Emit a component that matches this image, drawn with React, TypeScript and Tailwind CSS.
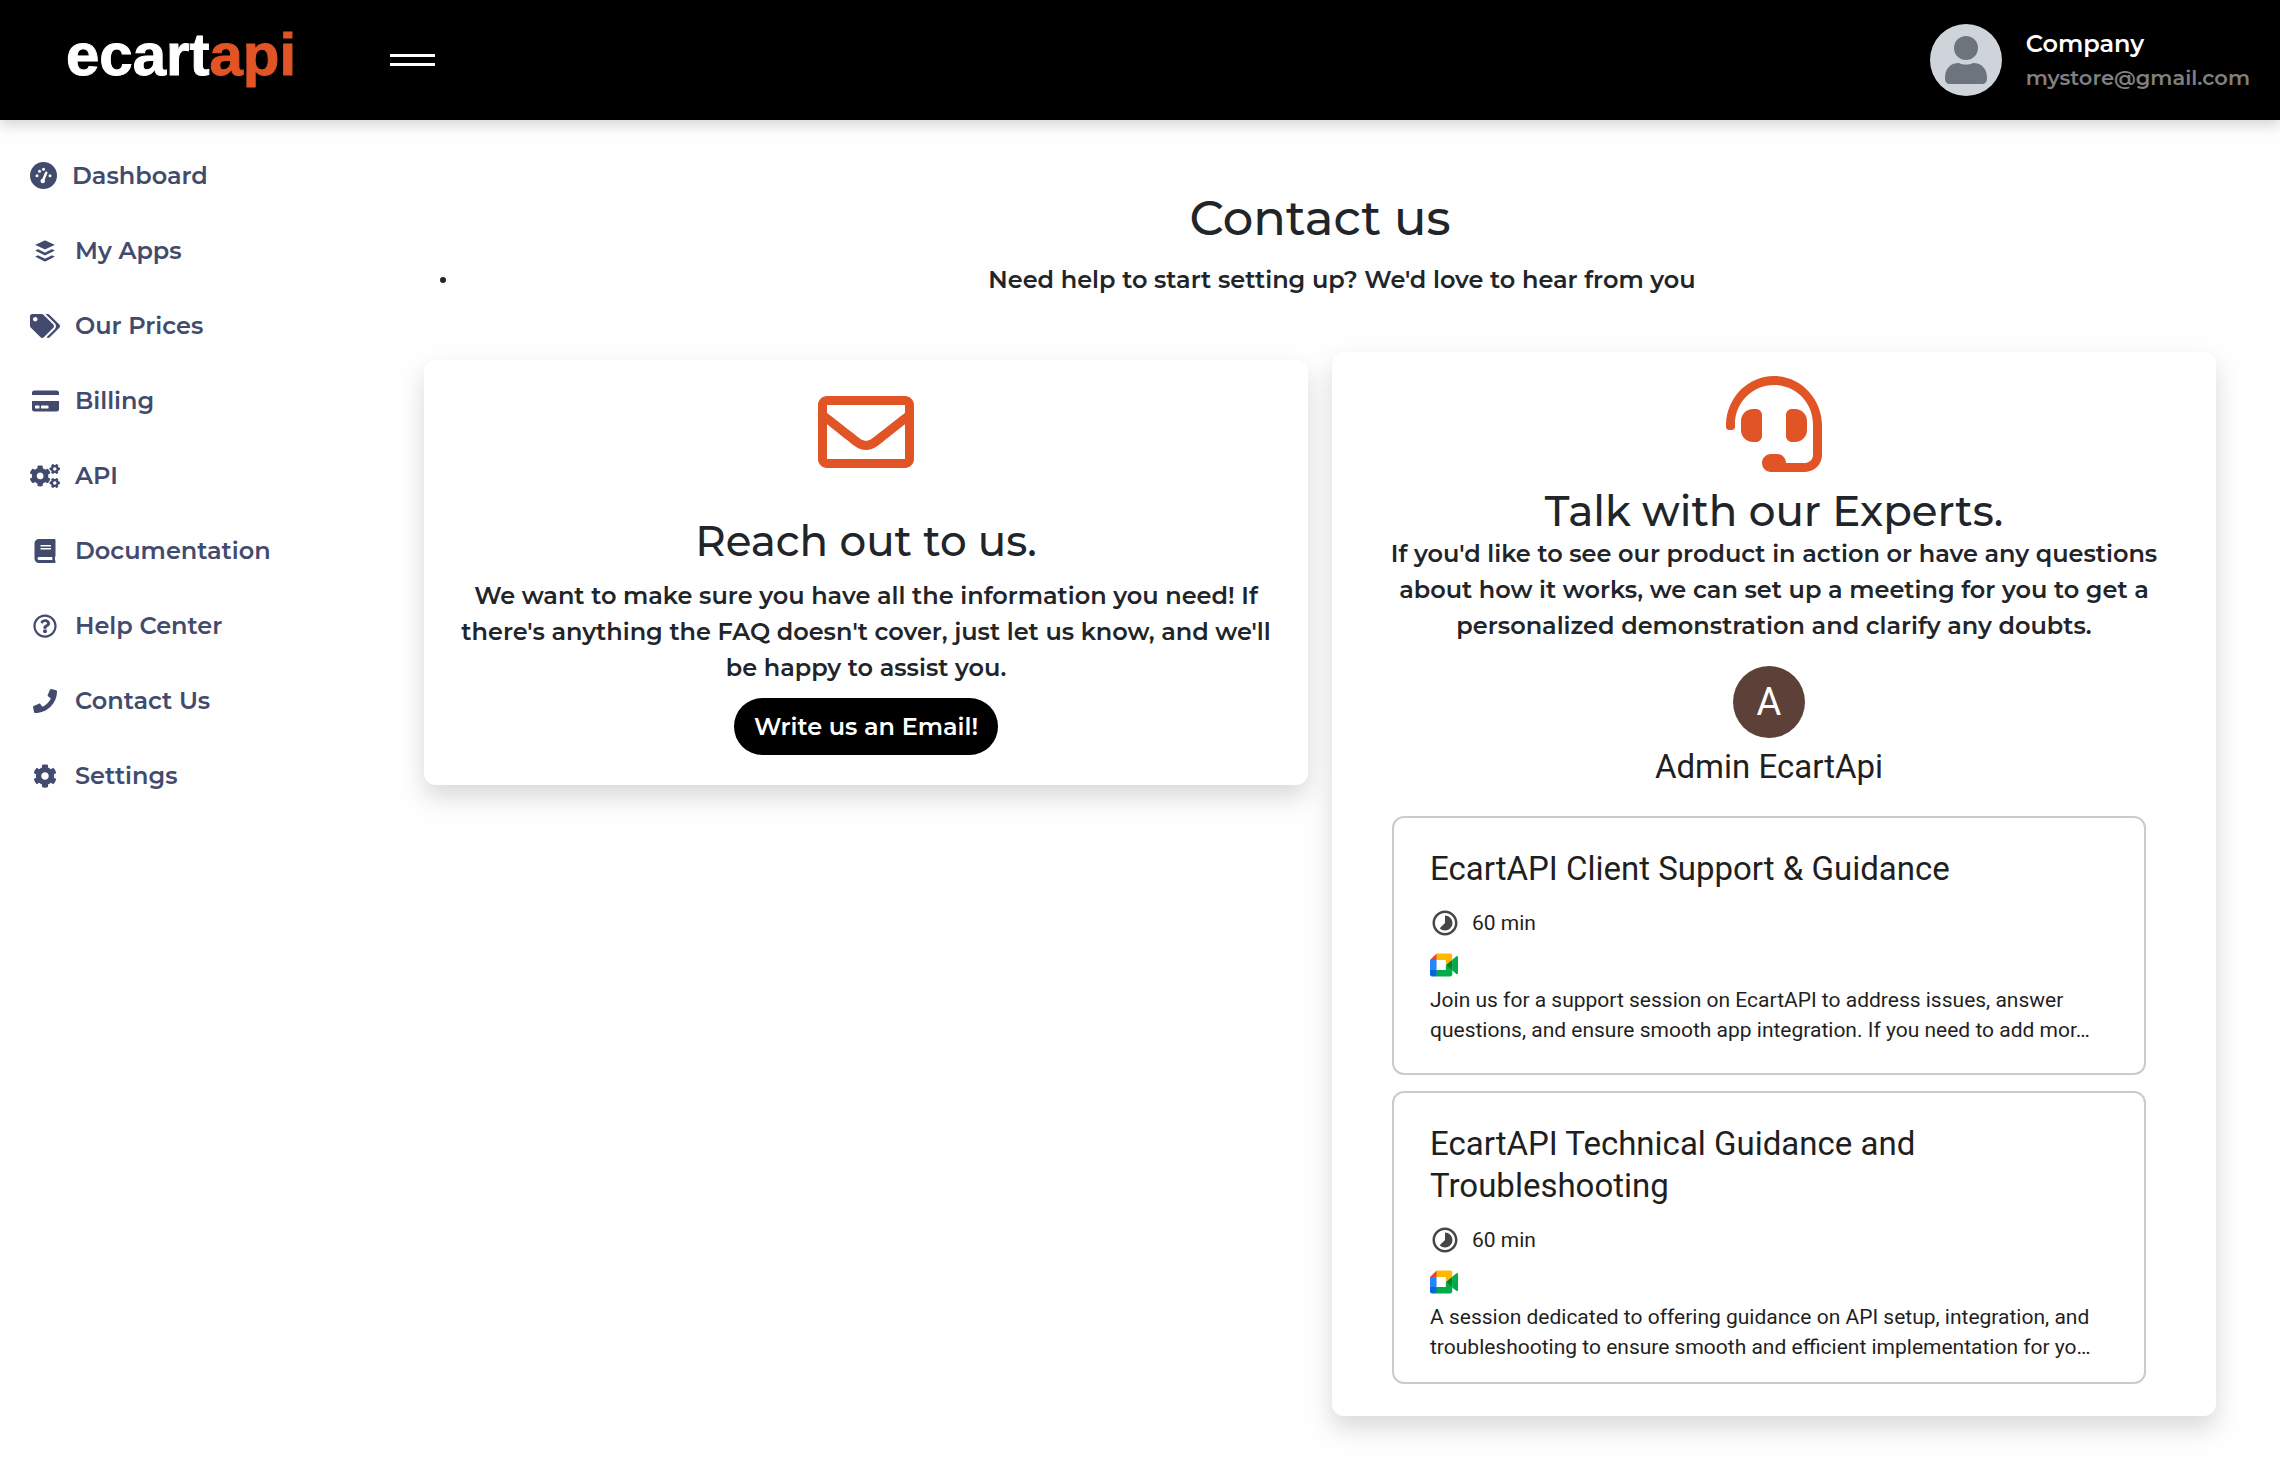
import type { ComponentType } from "react";
import {
  FaBook,
  FaBuffer,
  FaCog,
  FaCogs,
  FaCreditCard,
  FaHeadset,
  FaPhone,
  FaRegEnvelope,
  FaRegQuestionCircle,
  FaTags,
} from "react-icons/fa";
import { MdTimelapse } from "react-icons/md";

type NavItem = {
  href: string;
  label: string;
  icon: ComponentType<{ className?: string }>;
  size: string;
  slot?: string;
};

const NAV: NavItem[] = [
  { href: "#dashboard", label: "Dashboard", icon: GaugeIcon, size: "size-[27px]", slot: "w-[27px]" },
  { href: "#apps", label: "My Apps", icon: FaBuffer, size: "size-6" },
  { href: "#prices", label: "Our Prices", icon: FaTags, size: "h-6 w-[30px]" },
  { href: "#billing", label: "Billing", icon: FaCreditCard, size: "h-6 w-[27px]" },
  { href: "#api", label: "API", icon: FaCogs, size: "h-6 w-[30px]" },
  { href: "#docs", label: "Documentation", icon: FaBook, size: "size-6" },
  { href: "#help", label: "Help Center", icon: FaRegQuestionCircle, size: "size-6" },
  { href: "#contact", label: "Contact Us", icon: FaPhone, size: "size-6" },
  { href: "#settings", label: "Settings", icon: FaCog, size: "size-6" },
];

const SESSIONS = [
  {
    title: "EcartAPI Client Support & Guidance",
    duration: "60 min",
    description:
      "Join us for a support session on EcartAPI to address issues, answer questions, and ensure smooth app integration. If you need to add mor…",
    pad: "pb-7",
  },
  {
    title: "EcartAPI Technical Guidance and Troubleshooting",
    duration: "60 min",
    description:
      "A session dedicated to offering guidance on API setup, integration, and troubleshooting to ensure smooth and efficient implementation for yo…",
    pad: "pb-5",
  },
];

function GaugeIcon({ className }: { className?: string }) {
  return (
    <svg viewBox="0 0 54 54" className={className} aria-hidden="true">
      <circle cx="27" cy="27" r="27" fill="currentColor" />
      <g fill="#fefefe">
        <circle cx="14" cy="27.5" r="3" />
        <circle cx="19" cy="18.5" r="3" />
        <circle cx="27" cy="14.5" r="3" />
        <circle cx="40" cy="27.5" r="3" />
        <circle cx="25.5" cy="38" r="4.5" />
      </g>
      <path d="M26 37l6.500-15.500" stroke="#fefefe" strokeWidth="5" strokeLinecap="round" />
    </svg>
  );
}

function Logo() {
  return (
    <a
      href="#home"
      aria-label="ecartapi"
      className="flex pb-[10px] font-['Liberation_Sans',sans-serif] text-[60px] leading-[60px] font-bold [-webkit-text-stroke:1px]"
    >
      <span className="text-white">ecart</span>
      <span className="text-[#e05426]">api</span>
    </a>
  );
}

function Avatar() {
  return (
    <svg viewBox="0 0 72 72" className="size-[72px] shrink-0" aria-hidden="true">
      <circle cx="36" cy="36" r="36" fill="#ced4da" />
      <circle cx="36" cy="24" r="12" fill="#6c757d" />
      <path d="M15 54c0-9 5-15 14-15 4 2 10 2 14 0 9 0 14 6 14 15 0 4-2 6-5 6H20c-3 0-5-2-5-6z" fill="#6c757d" />
    </svg>
  );
}

function MeetIcon() {
  return (
    <svg viewBox="0 0 87.5 72" className="h-6 w-7" role="img" aria-label="Google Meet">
      <path fill="#00832d" d="M49.5 36l8.53 9.75 11.47 7.33 2-17.02-2-16.64-11.69 6.44z" />
      <path fill="#0066da" d="M0 51.5V66c0 3.315 2.685 6 6 6h14.5l3-10.96-3-9.54-9.95-3z" />
      <path fill="#e94235" d="M20.5 0L0 20.5l10.55 3 9.95-3 2.95-9.41z" />
      <path fill="#2684fc" d="M20.5 20.5H0v31h20.5z" />
      <path
        fill="#00ac47"
        d="M82.6 8.68L69.5 19.42v33.66l13.16 10.79c1.97 1.54 4.85.135 4.85-2.37V11c0-2.535-2.945-3.925-4.91-2.32zM49.5 36v15.5h-29V72h43c3.315 0 6-2.685 6-6V53.08z"
      />
      <path fill="#ffba00" d="M63.5 0h-43v20.5h29V36l20-16.57V6c0-3.315-2.685-6-6-6z" />
    </svg>
  );
}

function Header() {
  return (
    <header className="flex h-[120px] items-center bg-black pr-[30px] pl-[66px] shadow-[0_6px_12px_rgba(0,0,0,0.15)]">
      <Logo />
      <button type="button" aria-label="Toggle menu" className="ml-[94px] flex w-[45px] flex-col gap-[6px]">
        <span className="h-[3px] w-full bg-white" />
        <span className="h-[3px] w-full bg-white" />
      </button>
      <div className="ml-auto flex items-center gap-6">
        <Avatar />
        <div className="pt-[2px] font-semibold">
          <p className="text-[24px] leading-[34px] text-white">Company</p>
          <p className="text-[21px] leading-[34px] text-[#808080]">mystore@gmail.com</p>
        </div>
      </div>
    </header>
  );
}

function Sidebar() {
  return (
    <nav className="w-[400px] shrink-0 pt-[18px] pl-[30px]">
      <ul>
        {NAV.map(({ href, label, icon: Icon, size, slot = "w-[30px]" }) => (
          <li key={href}>
            <a href={href} className="flex h-[75px] items-center gap-[15px] text-[24px] font-semibold text-[#424b6e]">
              <span className={`flex justify-center ${slot}`}>
                <Icon className={size} />
              </span>
              {label}
            </a>
          </li>
        ))}
      </ul>
    </nav>
  );
}

function EmailCard() {
  return (
    <section className="mt-2 flex flex-col items-center rounded-xl bg-white px-6 pt-6 pb-[30px] shadow-[0_12px_24px_rgba(0,0,0,0.15)]">
      <FaRegEnvelope className="size-24 text-[#e05426]" />
      <h2 className="mt-9 text-[42px] leading-[50px] font-medium">Reach out to us.</h2>
      <p className="mt-3 text-[24px] leading-9 font-semibold">
        We want to make sure you have all the information you need! If there's anything the FAQ doesn't cover, just let
        us know, and we'll be happy to assist you.
      </p>
      <button type="button" className="mt-3 h-[57px] rounded-full bg-black px-5 text-[24px] font-semibold text-white">
        Write us an Email!
      </button>
    </section>
  );
}

function ExpertsCard() {
  return (
    <section className="flex flex-col items-center rounded-xl bg-white px-12 pt-6 pb-8 shadow-[0_12px_24px_rgba(0,0,0,0.15)]">
      <FaHeadset className="size-24 text-[#e05426]" />
      <h2 className="mt-[14px] text-[42px] leading-[50px] font-medium">Talk with our Experts.</h2>
      <p className="text-[24px] leading-9 font-semibold">
        If you'd like to see our product in action or have any questions about how it works, we can set up a meeting for
        you to get a personalized demonstration and clarify any doubts.
      </p>

      {/* Booking widget */}
      <div className="w-full pt-[22px] pr-[22px] pl-3 font-['Roboto',sans-serif] text-[#1f1f1f]">
        <div className="mx-auto flex size-[72px] items-center justify-center rounded-full bg-[#5d4037] text-[38px] text-white">
          A
        </div>
        <p className="mt-2 text-[33px] leading-[42px]">Admin EcartApi</p>
        <div className="mt-7 flex flex-col gap-4 text-left">
          {SESSIONS.map((session) => (
            <article
              key={session.title}
              className={`rounded-xl border-2 border-[#c9cbcd] px-9 pt-[30px] ${session.pad}`}
            >
              <h3 className="text-[33px] leading-[42px]">{session.title}</h3>
              <p className="mt-[18px] flex items-center gap-3 text-[21px] leading-[30px]">
                <MdTimelapse className="size-[30px] text-[#444746]" />
                {session.duration}
              </p>
              <div className="mt-[15px]">
                <MeetIcon />
              </div>
              <p className="mt-2 text-[21px] leading-[30px]">{session.description}</p>
            </article>
          ))}
        </div>
      </div>
    </section>
  );
}

export default function App() {
  return (
    <div className="min-h-screen bg-[#fefefe] font-['Montserrat','Inter',sans-serif] text-[#212529]">
      <Header />
      <div className="flex">
        <Sidebar />
        <main className="min-w-0 flex-1 pt-[68px] pr-16 pb-12 pl-6 text-center">
          <h1 className="text-[48px] leading-[60px] font-medium">Contact us</h1>
          <ul className="mt-[14px] text-[24px] leading-9 font-semibold">
            <li className="flex items-center gap-[22px] pl-4">
              <span className="size-[6px] rounded-full bg-[#212529]" />
              <span className="flex-1">Need help to start setting up? We'd love to hear from you</span>
            </li>
          </ul>
          <div className="mt-[54px] grid grid-cols-2 items-start gap-6">
            <EmailCard />
            <ExpertsCard />
          </div>
        </main>
      </div>
    </div>
  );
}
